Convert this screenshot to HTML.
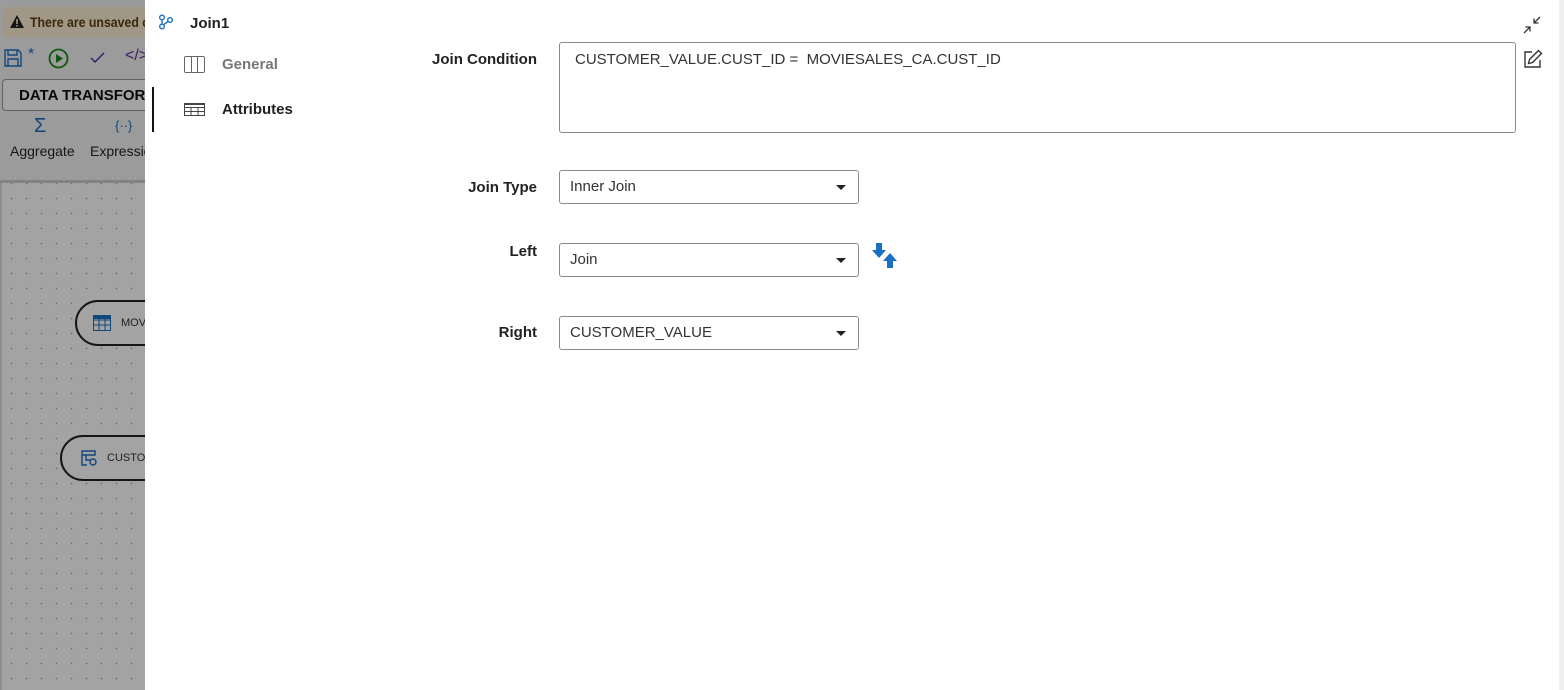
<!DOCTYPE html>
<html><head><meta charset="utf-8"><style>
*{box-sizing:border-box;margin:0;padding:0}
body{width:1564px;height:690px;overflow:hidden;font-family:"Liberation Sans",Arial,sans-serif;background:#fff;position:relative}
.left{position:absolute;left:0;top:0;width:145px;height:690px;background:#f2f2f2;overflow:hidden}
.ov{position:absolute;left:0;top:0;width:145px;height:690px;background:rgba(0,0,0,0.36)}
.abs{position:absolute}
.canvas{position:absolute;left:0;top:183px;width:145px;height:507px;background-color:#ffffff;background-image:radial-gradient(#b0b0b0 0.7px,transparent 1px);background-size:15px 15px;background-position:2px 8px;border-left:2px solid #ddd}
.node{position:absolute;height:46px;border:2.5px solid #222;border-radius:24px;background:#fff;font-size:11px;color:#333;display:flex;align-items:center;width:200px}
.lbl{position:absolute;font-size:15px;font-weight:bold;color:#222;text-align:right;width:200px}
.sel{position:absolute;left:559px;width:300px;height:34px;border:1px solid #8a8a8a;border-radius:3px;font-size:15px;color:#333;padding-left:10px;line-height:32px}
.sel:after{content:"";position:absolute;right:12px;top:14px;border-left:5px solid transparent;border-right:5px solid transparent;border-top:5px solid #222}
</style></head><body>
<div class="left">
  <div class="abs" style="left:3px;top:7px;width:160px;height:30px;background:#fcecd4;border-radius:3px"></div>
  <svg class="abs" style="left:10px;top:15px" width="14" height="13" viewBox="0 0 14 13"><path d="M7 0L14 13H0Z" fill="#222"/><rect x="6.2" y="4" width="1.6" height="5" fill="#fcecd4"/><rect x="6.2" y="10" width="1.6" height="1.5" fill="#fcecd4"/></svg>
  <div class="abs" style="left:30px;top:14px;font-size:14px;font-weight:bold;color:#5a3d10;white-space:nowrap;transform:scaleX(0.88);transform-origin:left">There are unsaved c</div>
  <svg class="abs" style="left:4px;top:49px" width="18" height="18" viewBox="0 0 18 18"><path d="M1 1h13l3 3v13H1z M4 1v5h9V1 M4 17v-7h10v7" fill="none" stroke="#1a6fc4" stroke-width="1.4"/></svg>
  <div class="abs" style="left:28px;top:46px;font-size:16px;color:#1a6fc4">*</div>
  <svg class="abs" style="left:48px;top:48px" width="21" height="21"><circle cx="10.5" cy="10.5" r="9" fill="none" stroke="#1a8a1a" stroke-width="1.8"/><path d="M8 6l7 4.5-7 4.5z" fill="#1a8a1a"/></svg>
  <svg class="abs" style="left:90px;top:52px" width="15" height="12"><path d="M1 6l4 4 9-9" fill="none" stroke="#3a3aa0" stroke-width="1.5"/></svg>
  <div class="abs" style="left:125px;top:47px;font-size:16px;color:#6a2aa0">&lt;/&gt;</div>
  <div class="abs" style="left:2px;top:79px;width:170px;height:32px;border:1px solid #999;border-radius:4px;background:#fff;font-size:15px;font-weight:bold;color:#111;padding:7px 0 0 16px;white-space:nowrap">DATA TRANSFORMATION</div>
  <div class="abs" style="left:34px;top:115px;font-size:20px;color:#1a6fc4">Σ</div>
  <div class="abs" style="left:10px;top:143px;font-size:14px;color:#222">Aggregate</div>
  <div class="abs" style="left:115px;top:118px;font-size:13px;color:#1a6fc4">{··}</div>
  <div class="abs" style="left:90px;top:143px;font-size:14px;color:#222;white-space:nowrap">Expression</div>
  <div class="abs" style="left:0;top:180px;width:145px;height:3px;background:#ccc"></div>
  <div class="canvas"></div>
  <div class="node" style="left:75px;top:300px"><svg style="margin-left:16px" width="18" height="16"><rect x="0.5" y="0.5" width="17" height="15" fill="#fff" stroke="#1a6fc4"/><path d="M0 5h18M0 10h18M6 0v16M12 0v16" stroke="#1a6fc4"/><rect x="0" y="0" width="18" height="4" fill="#1a6fc4"/></svg><span style="margin-left:10px">MOVIESALES_CA</span></div>
  <div class="node" style="left:60px;top:435px"><svg style="margin-left:19px" width="16" height="16"><path d="M1 1h13v4H1zM1 5v10h5M5 5v5h4" fill="none" stroke="#1a6fc4" stroke-width="1.4"/><circle cx="12" cy="12" r="3" fill="none" stroke="#1a6fc4" stroke-width="1.4"/></svg><span style="margin-left:10px">CUSTOMER_VALUE</span></div>
  <div class="ov"></div>
</div>
<div class="abs" style="left:1559px;top:0;width:5px;height:690px;background:#efefef"></div>

<svg class="abs" style="left:158px;top:14px" width="16" height="16" viewBox="0 0 16 16"><circle cx="4" cy="3.5" r="2.3" fill="none" stroke="#1a6fc4" stroke-width="1.4"/><circle cx="12" cy="6" r="2.3" fill="none" stroke="#1a6fc4" stroke-width="1.4"/><circle cx="4" cy="12.5" r="2.3" fill="none" stroke="#1a6fc4" stroke-width="1.4"/><path d="M4 6v4M10 7.5L5.5 10.8" stroke="#1a6fc4" stroke-width="1.4" fill="none"/></svg>
<div class="abs" style="left:190px;top:15px;font-size:15px;font-weight:bold;color:#222">Join1</div>
<svg class="abs" style="left:184px;top:56px" width="21" height="17"><rect x="0.5" y="0.5" width="20" height="16" rx="1.5" fill="none" stroke="#666"/><path d="M7.5 0v17M13.5 0v17" stroke="#666"/></svg>
<div class="abs" style="left:222px;top:56px;font-size:15px;font-weight:bold;color:#777">General</div>
<div class="abs" style="left:152px;top:87px;width:2px;height:45px;background:#111"></div>
<svg class="abs" style="left:184px;top:103px" width="21" height="13"><rect x="0.5" y="0.5" width="20" height="12" fill="none" stroke="#444"/><path d="M0 4.5h21M0 8.5h21M7 4v9M14 4v9" stroke="#444"/><rect x="0" y="0" width="21" height="2" fill="#444"/></svg>
<div class="abs" style="left:222px;top:101px;font-size:15px;font-weight:bold;color:#222">Attributes</div>

<svg class="abs" style="left:1522px;top:15px" width="20" height="20" viewBox="0 0 20 20"><path d="M18 2l-6 6M12 3.5v4.5h4.5M2 18l6-6M8 16.5v-4.5h-4.5" fill="none" stroke="#333" stroke-width="1.3"/></svg>
<svg class="abs" style="left:1523px;top:49px" width="20" height="20" viewBox="0 0 20 20"><path d="M9 3H2v15h15v-7" fill="none" stroke="#333" stroke-width="1.4"/><path d="M15.5 1.5l3 3-9 9-4 1 1-4z" fill="none" stroke="#333" stroke-width="1.4"/></svg>

<div class="lbl" style="left:337px;top:51px">Join Condition</div>
<div class="abs" style="left:559px;top:42px;width:957px;height:91px;border:1px solid #8a8a8a;border-radius:3px;font-size:15px;color:#333;padding:8px 0 0 15px;white-space:pre">CUSTOMER_VALUE.CUST_ID =  MOVIESALES_CA.CUST_ID</div>
<div class="lbl" style="left:337px;top:179px">Join Type</div>
<div class="sel" style="top:170px">Inner Join</div>
<div class="lbl" style="left:337px;top:243px">Left</div>
<div class="sel" style="top:243px">Join</div>
<svg class="abs" style="left:872px;top:243px" width="26" height="25" viewBox="0 0 26 25"><path d="M4 0h6v7h4l-7 8-7-8h4z" fill="#1a6fc4"/><path d="M15 25h6v-7h4l-7-8-7 8h4z" fill="#1a6fc4"/></svg>
<div class="lbl" style="left:337px;top:324px">Right</div>
<div class="sel" style="top:316px">CUSTOMER_VALUE</div>
</body></html>
